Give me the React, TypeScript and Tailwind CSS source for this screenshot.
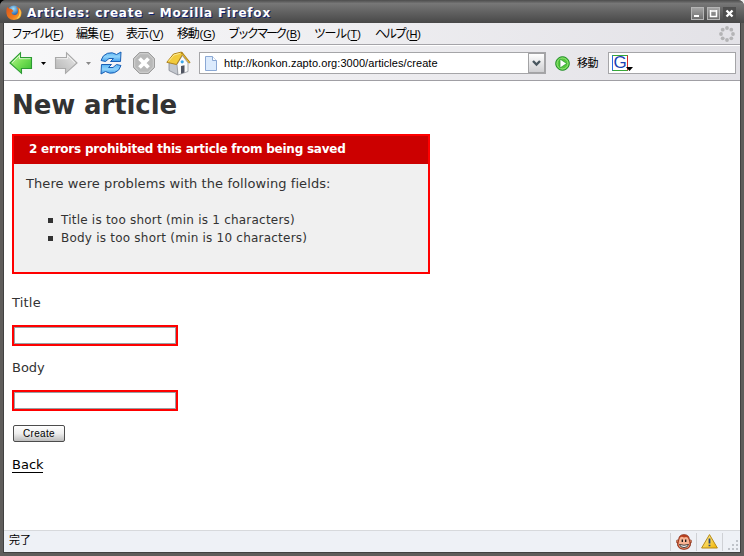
import React from "react";

const UI = "font-['Liberation_Sans','Noto_Sans_CJK_JP',sans-serif]";

const menus = [
  { label: "ファイル", k: "F", box: "w-[65px]", text: "tracking-[-2.6px]" },
  { label: "編集", k: "E", box: "w-[50px]", text: "tracking-[-0.9px]" },
  { label: "表示", k: "V", box: "w-[51px]", text: "tracking-[-1px]" },
  { label: "移動", k: "G", box: "w-[51px]", text: "tracking-[-1.2px]" },
  { label: "ブックマーク", k: "B", box: "w-[86px]", text: "tracking-[-2.5px]" },
  { label: "ツール", k: "T", box: "w-[61px]", text: "tracking-[-1.4px]" },
  { label: "ヘルプ", k: "H", box: "w-[60px]", text: "tracking-[-2.1px]" },
];

function FirefoxLogo() {
  return (
    <svg width="16" height="16" viewBox="0 0 16 16" className="shrink-0">
      <defs>
        <radialGradient id="globe" cx=".45" cy=".25">
          <stop offset="0" stopColor="#a5e0f8" />
          <stop offset="1" stopColor="#1c5fae" />
        </radialGradient>
        <linearGradient id="fox" x1="0" y1="0" x2="1" y2="1">
          <stop offset="0" stopColor="#d9541c" />
          <stop offset=".6" stopColor="#ee7a1d" />
          <stop offset="1" stopColor="#f9c440" />
        </linearGradient>
      </defs>
      <circle cx="8" cy="7" r="6.6" fill="url(#globe)" />
      <path d="M1 2 3 3.500 5.500 4 7.500 6 5.500 7.500Q6 10 9 10q3-.5 3-4 0-2.500-2-4.500 5 1.500 5.600 6Q15.500 14.500 8 15 1 14.500.4 8 .2 4.500 1 2Z" fill="url(#fox)" />
      <path d="M13 3q2.500 3 1.500 7-1 3-4 4 3-3 3-6Z" fill="#fbd75a" />
    </svg>
  );
}

function Arrow({ green }: { green?: boolean }) {
  return (
    <svg width="24" height="24" viewBox="0 0 24 24" className={green ? "shrink-0" : "shrink-0 -scale-x-100"}>
      <defs>
        <linearGradient id={green ? "ga" : "gb"} x1="0" y1="0" x2="1" y2="1">
          <stop offset="0" stopColor={green ? "#c9f7a4" : "#eeeeee"} />
          <stop offset=".5" stopColor={green ? "#76df55" : "#cecece"} />
          <stop offset="1" stopColor={green ? "#36bd31" : "#b5b5b5"} />
        </linearGradient>
      </defs>
      <path d="M1 12 11.500 1.700V6.500H22.500v11H12.500v4.800Z" fill={green ? "url(#ga)" : "url(#gb)"} stroke={green ? "#2c9a34" : "#a9a9a9"} strokeWidth="1.100" />
      <path d="M3 11.800 10.500 4.500V7.700h11" fill="none" stroke="#fff" strokeOpacity=".65" />
    </svg>
  );
}

function Caret({ fill }: { fill: string }) {
  return (
    <svg width="5" height="3" viewBox="0 0 5 3" className="shrink-0">
      <path d="M0 0h5L2.500 3Z" fill={fill} />
    </svg>
  );
}

function Reload() {
  return (
    <svg width="24" height="24" viewBox="0 0 24 24" className="shrink-0">
      <defs>
        <linearGradient id="rl" x1="0" y1="0" x2="0" y2="1">
          <stop offset="0" stopColor="#59b4f4" />
          <stop offset=".5" stopColor="#8fd3fb" />
          <stop offset="1" stopColor="#3f9bea" />
        </linearGradient>
      </defs>
      <g fill="url(#rl)" stroke="#1a5fb4" strokeWidth="1">
        <path d="M2 9.500Q3.500 4 8.500 2.300 13.500.7 17.500 3.500L22 1 21.500 10.500H11.500L14.500 7.500Q9.500 6 6.500 10.500Z" />
        <path d="M22 14.500Q20.500 20 15.500 21.700 10.500 23.300 6.500 20.500L2 23 2.500 13.500H12.500L9.500 16.500Q14.500 18 17.500 13.500Z" />
      </g>
    </svg>
  );
}

function Stop() {
  return (
    <svg width="24" height="24" viewBox="0 0 24 24" className="shrink-0">
      <path d="M7.500 1.500h9l6 6v9l-6 6h-9l-6-6v-9Z" fill="#b9b9b9" stroke="#9c9c9c" />
      <path d="M8 2.700h8l5.300 5.300v8L16 21.300H8L2.700 16V8Z" fill="none" stroke="#d0d0d0" />
      <path d="m7.500 7.500 9 9m0-9-9 9" stroke="#fff" strokeWidth="3.800" />
    </svg>
  );
}

function Home() {
  return (
    <svg width="25" height="25" viewBox="0 0 25 25" className="shrink-0">
      <path d="M3 12v7.500l9 4.500V12L8 7Z" fill="#c3c7ce" stroke="#777b85" strokeWidth=".7" />
      <path d="M11 13.500 16.300 4.500 22 12V20.500L12 24Z" fill="#fafafa" stroke="#888c93" strokeWidth=".7" />
      <path d="M15 15 18.500 14.300v7.300l-3.500 1.200Z" fill="#505461" />
      <circle cx="16.200" cy="10.800" r="1.600" fill="#3aa6ea" />
      <path d="M7.500 3 15.500 1 16.500 3.500 10.500 13.500.8 11.300Z" fill="#f2cb3c" stroke="#a87912" strokeWidth=".9" />
      <path d="M8 4 14.500 2.300M2.500 10.300 8 4" fill="none" stroke="#fdeb97" />
      <path d="M15.500 1.500 23.800 12" stroke="#a87912" strokeWidth="2" />
      <path d="M16 2.500 23.300 11.700" stroke="#f2cb3c" strokeWidth=".8" />
    </svg>
  );
}

function PageIcon() {
  return (
    <svg width="12" height="15" viewBox="0 0 12 15" className="shrink-0">
      <path d="M.5.5h7L11.500 4.500V14.500H.5Z" fill="#dcebfd" stroke="#8ba8d4" />
      <path d="M7.500.5v4h4" fill="#fff" stroke="#8ba8d4" />
    </svg>
  );
}

function Throbber() {
  return (
    <svg width="16" height="16" viewBox="0 0 16 16" fill="#b4b4b6" className="shrink-0">
      <circle cx="8" cy="2" r="1.900" /><circle cx="12.300" cy="3.700" r="1.900" />
      <circle cx="14" cy="8" r="1.900" /><circle cx="12.300" cy="12.300" r="1.900" />
      <circle cx="8" cy="14" r="1.900" /><circle cx="3.700" cy="12.300" r="1.900" />
      <circle cx="2" cy="8" r="1.900" /><circle cx="3.700" cy="3.700" r="1.900" />
    </svg>
  );
}

function GoIcon() {
  return (
    <svg width="15" height="15" viewBox="0 0 15 15" className="shrink-0">
      <circle cx="7.500" cy="7.500" r="6.800" fill="#55c73e" stroke="#198a21" />
      <circle cx="7.500" cy="7.500" r="5.500" fill="none" stroke="#a6eb8a" strokeWidth=".8" />
      <path d="M5 3 11.700 7.500 5 12Z" fill="#fff" stroke="#239328" strokeWidth=".7" />
    </svg>
  );
}

function SearchEngine() {
  return (
    <span className="flex items-end w-[21px] h-4">
      <span className="flex items-center justify-center w-4 h-4 shrink-0 border border-l-[#2b6be0] border-t-[#38a838] border-r-[#d22b2b] border-b-[#38a838] bg-white text-[#1a3fb4] text-[17px] leading-[14px]">G</span>
      <svg width="7" height="4" viewBox="0 0 7 4" className="shrink-0 -ml-0.5"><path d="M0 0h7L3.500 4Z" /></svg>
    </span>
  );
}

function Monkey() {
  return (
    <svg width="16" height="16" viewBox="0 0 16 16" className="shrink-0">
      <circle cx="2" cy="7.500" r="1.700" fill="#e08a66" stroke="#7d2a15" strokeWidth=".6" />
      <circle cx="14" cy="7.500" r="1.700" fill="#e08a66" stroke="#7d2a15" strokeWidth=".6" />
      <path d="M8 .5Q13.500.5 13.500 6.500q1.500 2 1 5Q13 15.500 8 15.500T1.500 11.500q-.5-3 1-5Q2.500.5 8 .5Z" fill="#b9401f" stroke="#7d2a15" strokeWidth=".6" />
      <path d="M8 3.500Q4.500 1.500 3.500 5T2.500 10.500Q3 14.500 8 14.500t5.500-4Q13.500 8 12.500 5T8 3.500Z" fill="#f6b393" />
      <path d="M6.300 5.500v2.500M9.700 5.500v2.500" stroke="#111" strokeWidth="1.300" />
      <path d="M3.500 10.500q4.500 1.500 9 0Q12 13.500 8 13.500t-4.500-3Z" fill="#fff" stroke="#111" strokeWidth=".8" />
    </svg>
  );
}

function Warning() {
  return (
    <svg width="17" height="15" viewBox="0 0 17 15" className="shrink-0">
      <defs>
        <linearGradient id="wn" x1="0" y1="0" x2="1" y2="1">
          <stop offset="0" stopColor="#fff6a8" /><stop offset="1" stopColor="#f2b400" />
        </linearGradient>
      </defs>
      <path d="M8.500 .6 16.400 14H.6Z" fill="url(#wn)" stroke="#b78a17" strokeLinejoin="round" />
      <path d="M8.500 4.500v5M8.500 10.700v1.600" stroke="#2d4779" strokeWidth="1.800" />
    </svg>
  );
}

function WindowButton({ kind }: { kind: "min" | "max" | "close" }) {
  return (
    <span className={kind === "close" ? "w-[13px] h-[13px] bg-[#4e4e4e]" : "w-[13px] h-[13px] bg-gradient-to-b from-[#a4a4a4] to-[#6f6f6f] border border-[#b5b5b5]"}>
      <svg width="13" height="13" viewBox="0 0 13 13" fill="none" stroke="#fff" className={kind === "close" ? "" : "-m-px"}>
        {kind === "min" && <path d="M3 9h5" strokeWidth="2" />}
        {kind === "max" && <path d="M3.500 3v6.500h6V3M3 4h7" strokeWidth="1.500" />}
        {kind === "close" && <path d="m3.500 3.500 6 6m0-6-6 6" strokeWidth="2.400" />}
      </svg>
    </span>
  );
}

function ErrorField() {
  return (
    <div className="w-[166px] h-[21px] bg-[red] p-0.5">
      <input className="block w-full h-full bg-white border border-[#9aa0a4] outline-none" />
    </div>
  );
}

export default function App() {
  return (
    <div className="w-[744px] bg-gradient-to-r from-black from-50% to-[#eee] to-50%">
      <div className={`w-[744px] h-[556px] flex flex-col bg-[#5f5d5b] rounded-t-md overflow-hidden text-black ${UI}`}>
        <header className="h-[23px] shrink-0 flex items-center pt-[3px] pl-1.5 pr-2 bg-gradient-to-b from-[#4c4c4c] via-[#777] via-15% to-[#484848]">
          <FirefoxLogo />
          <h1 className="ml-[5px] text-[12px] leading-4 font-bold text-white whitespace-nowrap tracking-[0.78px] [text-shadow:1px_1px_0_#10206f] font-['DejaVu_Sans',sans-serif]">Articles: create – Mozilla Firefox</h1>
          <div className="ml-auto flex gap-[3px]">
            <WindowButton kind="min" /><WindowButton kind="max" /><WindowButton kind="close" />
          </div>
        </header>

        <div className="flex-1 min-h-0 flex flex-col mx-[3px] mb-[3px] border-x border-b border-[#414141] bg-white">
          <nav className="h-[22px] shrink-0 flex items-center pl-[7px] pr-[5px] bg-gradient-to-r from-[#f8f8f9] to-[#e3e2e7] border-b border-[#a5a4a9] text-[12px] leading-5">
            {menus.map((m) => (
              <span key={m.k} className={`${m.box} shrink-0 whitespace-nowrap`}>
                <span className={m.text}>{m.label}</span>
                <span className="ml-px text-[11px]">(<u className="underline-offset-2">{m.k}</u>)</span>
              </span>
            ))}
            <span className="ml-auto"><Throbber /></span>
          </nav>

          <div className="h-9 shrink-0 flex items-center pl-[5px] pr-1 bg-gradient-to-r from-[#f8f8f9] to-[#e3e2e7] border-t border-t-white border-b border-b-[#a09fa4]">
            <Arrow green />
            <span className="ml-2 flex"><Caret fill="#000" /></span>
            <span className="ml-2 flex"><Arrow /></span>
            <span className="ml-2 flex"><Caret fill="#888" /></span>
            <span className="ml-2 flex"><Reload /></span>
            <span className="ml-[9px] flex"><Stop /></span>
            <span className="ml-2.5 flex"><Home /></span>
            <div className="ml-2 w-[347px] h-[22px] shrink-0 flex items-center pl-[5px] bg-white border border-[#a5a5a8]">
              <PageIcon />
              <span className="ml-[7px] text-[11px] leading-5 tracking-[0.06px] whitespace-nowrap">http://konkon.zapto.org:3000/articles/create</span>
              <span className="ml-auto w-[17px] h-5 flex items-center justify-center border border-[#a3a3a5] bg-gradient-to-b from-white to-[#cfcfd2]">
                <svg width="9" height="7" viewBox="0 0 9 7"><path d="m1 1 3.500 3.500L8 1" fill="none" stroke="#49575f" strokeWidth="2.400" /></svg>
              </span>
            </div>
            <span className="ml-[9px] flex"><GoIcon /></span>
            <span className="ml-[7px] w-[31px] text-[11px] leading-5 tracking-[-0.5px] shrink-0">移動</span>
            <div className="flex-1 h-[22px] flex items-center pl-[3px] bg-white border border-[#a5a5a8]"><SearchEngine /></div>
          </div>

          <main className="flex-1 min-h-0 px-2 text-[#333] text-[13px] leading-[18px] font-['DejaVu_Sans',sans-serif]">
            <h2 className="h-[53px] pt-[7px] text-[26px] leading-[35px] font-bold whitespace-nowrap tracking-[-0.1px]">New article</h2>
            <section className="w-[418px] h-[140px] border-2 border-[red] bg-[#f0f0f0]">
              <h3 className="h-7 pl-[15px] pt-1 bg-[#c00] text-white text-[12px] leading-[18px] font-bold whitespace-nowrap tracking-[-0.23px]">2 errors prohibited this article from being saved</h3>
              <p className="mt-[11px] pl-3 whitespace-nowrap tracking-[0.08px]">There were problems with the following fields:</p>
              <ul className="mt-[18px] ml-[47px] text-[12px] tracking-[0.22px]">
                {["Title is too short (min is 1 characters)", "Body is too short (min is 10 characters)"].map((t) => (
                  <li key={t} className="flex items-center whitespace-nowrap -ml-[13px]">
                    <span className="w-[5px] h-[5px] mr-2 bg-[#333]" />{t}
                  </li>
                ))}
              </ul>
            </section>
            <p className="mt-5 mb-[13px] tracking-[0.2px]">Title</p>
            <ErrorField />
            <p className="my-[13px]">Body</p>
            <ErrorField />
            <button className={`mt-3.5 ml-px w-[52px] h-[17px] flex items-center justify-center rounded-[2px] border border-[#4c4c4c] bg-gradient-to-b from-white via-[#eee] to-[#bdbdbd] text-black text-[10px] leading-none tracking-[0.3px] ${UI}`}>Create</button>
            <a className="mt-3.5 block w-[31px] h-[17px] border-b border-black text-black leading-[17px]">Back</a>
          </main>

          <footer className="h-[22px] shrink-0 flex items-center pl-[5px] pb-1 bg-[#eef1f6] border-t border-[#d7d9dc] text-[11px] leading-[18px]">
            <span>完了</span>
            <div className="ml-auto -mb-1 flex items-center h-[18px]">
              <span className="w-[26px] h-full flex items-center justify-center border-l border-[#cfd1d5]"><Monkey /></span>
              <span className="w-[26px] h-full flex items-center justify-center border-l border-[#cfd1d5]"><Warning /></span>
              <span className="w-[18px] h-full flex items-end justify-end border-l border-[#cfd1d5]">
                <svg width="12" height="12" viewBox="0 0 12 12" fill="#bfc3c9"><path d="M8 1h2v2H8zM4 5h2v2H4zM8 5h2v2H8zM0 9h2v2H0zM4 9h2v2H4zM8 9h2v2H8z" /></svg>
              </span>
            </div>
          </footer>
        </div>
      </div>
    </div>
  );
}
